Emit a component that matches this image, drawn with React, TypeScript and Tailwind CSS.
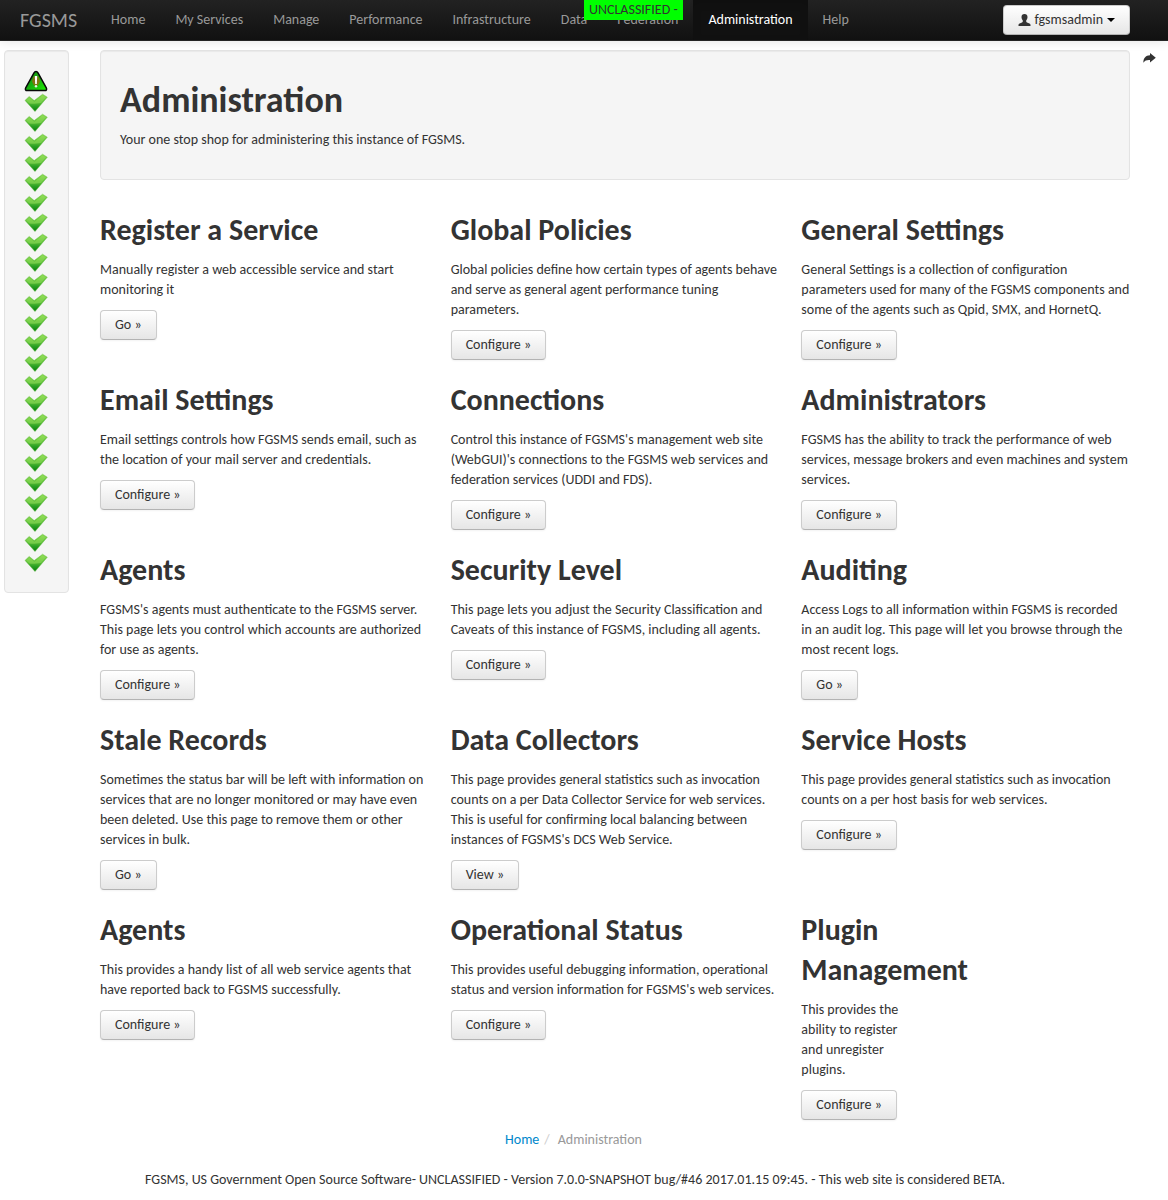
import React from "react";

type Item = { title: string; text: string; action: string; narrow?: boolean };

const navItems = [
  "Home",
  "My Services",
  "Manage",
  "Performance",
  "Infrastructure",
  "Data",
  "Federation",
  "Administration",
  "Help",
];

const items: Item[] = [
  {
    title: "Register a Service",
    text: "Manually register a web accessible service and start monitoring it",
    action: "Go »",
  },
  {
    title: "Global Policies",
    text: "Global policies define how certain types of agents behave and serve as general agent performance tuning parameters.",
    action: "Configure »",
  },
  {
    title: "General Settings",
    text: "General Settings is a collection of configuration parameters used for many of the FGSMS components and some of the agents such as Qpid, SMX, and HornetQ.",
    action: "Configure »",
  },
  {
    title: "Email Settings",
    text: "Email settings controls how FGSMS sends email, such as the location of your mail server and credentials.",
    action: "Configure »",
  },
  {
    title: "Connections",
    text: "Control this instance of FGSMS's management web site (WebGUI)'s connections to the FGSMS web services and federation services (UDDI and FDS).",
    action: "Configure »",
  },
  {
    title: "Administrators",
    text: "FGSMS has the ability to track the performance of web services, message brokers and even machines and system services.",
    action: "Configure »",
  },
  {
    title: "Agents",
    text: "FGSMS's agents must authenticate to the FGSMS server. This page lets you control which accounts are authorized for use as agents.",
    action: "Configure »",
  },
  {
    title: "Security Level",
    text: "This page lets you adjust the Security Classification and Caveats of this instance of FGSMS, including all agents.",
    action: "Configure »",
  },
  {
    title: "Auditing",
    text: "Access Logs to all information within FGSMS is recorded in an audit log. This page will let you browse through the most recent logs.",
    action: "Go »",
  },
  {
    title: "Stale Records",
    text: "Sometimes the status bar will be left with information on services that are no longer monitored or may have even been deleted. Use this page to remove them or other services in bulk.",
    action: "Go »",
  },
  {
    title: "Data Collectors",
    text: "This page provides general statistics such as invocation counts on a per Data Collector Service for web services. This is useful for confirming local balancing between instances of FGSMS's DCS Web Service.",
    action: "View »",
  },
  {
    title: "Service Hosts",
    text: "This page provides general statistics such as invocation counts on a per host basis for web services.",
    action: "Configure »",
  },
  {
    title: "Agents",
    text: "This provides a handy list of all web service agents that have reported back to FGSMS successfully.",
    action: "Configure »",
  },
  {
    title: "Operational Status",
    text: "This provides useful debugging information, operational status and version information for FGSMS's web services.",
    action: "Configure »",
  },
  {
    title: "Plugin Management",
    text: "This provides the ability to register and unregister plugins.",
    action: "Configure »",
    narrow: true,
  },
];

function WarningIcon() {
  return (
    <svg viewBox="0 0 24 22" className="h-[22px] w-6" aria-hidden="true">
      <defs>
        <linearGradient id="warn" x1="0" y1="0" x2="1" y2="1">
          <stop offset="0" stopColor="#0f8a0c" />
          <stop offset="0.5" stopColor="#18b010" />
          <stop offset="1" stopColor="#1ef000" />
        </linearGradient>
      </defs>
      <path
        d="M12 1.600c.9 0 1.500.4 2 1.300l8.300 15c.8 1.500.1 2.700-1.500 2.700H3.200c-1.600 0-2.300-1.200-1.500-2.700l8.300-15c.5-.9 1.100-1.300 2-1.300z"
        fill="url(#warn)"
        stroke="#080808"
        strokeWidth="1.500"
      />
      <path d="M9.500 6.500h5l1.500 5-2 4h-4l-2-4z" fill="#c05010" opacity="0.6" />
      <path d="M10.800 6h2.400l-.4 8h-1.600z" fill="#fff" />
      <circle cx="12" cy="16.300" r="1.200" fill="#e8f5e0" />
    </svg>
  );
}

function CheckIcon() {
  return (
    <svg viewBox="0 0 24 20" className="h-5 w-6" aria-hidden="true">
      <defs>
        <linearGradient id="tick" x1="0" y1="0" x2="0" y2="1">
          <stop offset="0" stopColor="#86d848" />
          <stop offset="0.5" stopColor="#55bb33" />
          <stop offset="0.7" stopColor="#2ba024" />
          <stop offset="1" stopColor="#078009" />
        </linearGradient>
      </defs>
      <path
        d="M1 8.400 5.200 4.400l5 4.200L18.600 2.200 23.300 5.200 11 19.500z"
        fill="url(#tick)"
        stroke="#6cbf4a"
        strokeWidth="0.500"
        strokeLinejoin="round"
      />
      <path d="M2.200 8.500 5.300 5.500l5 4.200 8.400-6.400 3.300 2-5 5.600C13 10.800 9.500 12.500 5.500 11.500z" fill="#a6e66c" opacity="0.4" />
    </svg>
  );
}

function UserIcon() {
  return (
    <svg viewBox="0 0 12 12" className="h-3 w-[13px]" fill="#333" aria-hidden="true">
      <path d="M6 0c1.900 0 3 1.300 3 3 0 1.400-.6 2.700-1.300 3.500v1.100c0 .5.300.8.800 1l2.400.9c.7.300 1.100.8 1.100 1.500v1H0v-1c0-.7.4-1.200 1.100-1.500l2.400-.9c.5-.2.800-.5.800-1V6.500C3.600 5.700 3 4.400 3 3c0-1.700 1.100-3 3-3z" />
    </svg>
  );
}

function ShareIcon() {
  return (
    <svg viewBox="0 0 13 10" className="h-[10px] w-[13px]" fill="#333" aria-hidden="true">
      <path d="M7 0l5.800 4.800L7 9.600V7C4 6.800 1.800 7.400.4 9.800.2 5.300 2.600 2.300 7 2.200z" />
    </svg>
  );
}

const buttonStyle =
  "h-[30px] rounded border border-[#ccc] border-b-[#b3b3b3] bg-linear-to-b from-white to-[#e6e6e6] px-[14px] leading-5 shadow-[inset_0_1px_0_rgba(255,255,255,.2),0_1px_2px_rgba(0,0,0,.05)]";

const wellStyle =
  "rounded border border-[#e3e3e3] bg-[#f5f5f5] shadow-[inset_0_1px_1px_rgba(0,0,0,.05)]";

function Card({ item }: { item: Item }) {
  return (
    <section className="py-[10px]">
      <div className={item.narrow ? "w-[102px]" : ""}>
        <h2 className="mb-[10px] text-[30px] leading-10 font-bold">{item.title}</h2>
        <p className="mb-[10px]">{item.text}</p>
        <button type="button" className={`${buttonStyle} block`}>
          {item.action}
        </button>
      </div>
    </section>
  );
}

export default function App() {
  return (
    <div className="bg-white font-['Carlito','Calibri','Lato',sans-serif] text-[14px] leading-5 text-[#333]">
      <header className="relative flex h-[41px] items-stretch border-b border-[#252525] bg-linear-to-b from-[#222] to-[#111] pr-[38px] shadow-[0_1px_10px_rgba(0,0,0,.1)]">
        <a href="#" className="flex items-center pr-[19px] pl-5 text-[20px] font-light text-[#999]">
          FGSMS
        </a>
        <nav className="flex flex-1">
          {navItems.map((name) => (
            <a
              key={name}
              href="#"
              className={
                name === "Administration"
                  ? "flex items-center bg-[#111] px-[15px] text-white shadow-[inset_0_3px_8px_rgba(0,0,0,.125)]"
                  : "flex items-center px-[15px] text-[#999]"
              }
            >
              {name}
            </a>
          ))}
        </nav>
        <button type="button" className={`${buttonStyle} mt-[5px] flex items-center gap-1`}>
          <UserIcon />
          fgsmsadmin
          <span className="border-x-4 border-t-4 border-x-transparent border-t-black" />
        </button>
        <div className="absolute top-0 left-1/2 bg-[#0f0] px-[5px] text-[#333]">UNCLASSIFIED -</div>
      </header>

      <div className="flex items-start pt-[9px] pl-1">
        <aside className={`${wellStyle} flex w-[65px] flex-col items-start pt-[19px] pb-5 pl-[19px]`}>
          <WarningIcon />
          {Array.from({ length: 24 }, (_, i) => (
            <CheckIcon key={i} />
          ))}
        </aside>

        <main className="ml-[31px] min-w-0 flex-1">
          <div className={`${wellStyle} mb-5 p-[19px]`}>
            <h1 className="my-[10px] text-[36px] leading-10 font-bold">Administration</h1>
            <p className="mb-[10px]">Your one stop shop for administering this instance of FGSMS.</p>
          </div>
          <div className="grid grid-cols-3 gap-x-[22px]">
            {items.map((item, i) => (
              <Card key={i} item={item} />
            ))}
          </div>
        </main>

        <a href="#" aria-label="Share" className="flex w-[38px] justify-center pt-[3px]">
          <ShareIcon />
        </a>
      </div>

      <footer className="text-center">
        <nav aria-label="Breadcrumb" className="flex justify-center pr-[21px]">
          <a href="#" className="text-[#08c]">
            Home
          </a>
          <span className="px-[5px] text-[#ccc]">/</span>
          <span className="pl-[3px] text-[#999]">Administration</span>
        </nav>
        <p className="py-5 pr-[18px]">
          FGSMS, US Government Open Source Software- UNCLASSIFIED - Version 7.0.0-SNAPSHOT bug/#46
          2017.01.15 09:45. - This web site is considered BETA.
        </p>
      </footer>
    </div>
  );
}
